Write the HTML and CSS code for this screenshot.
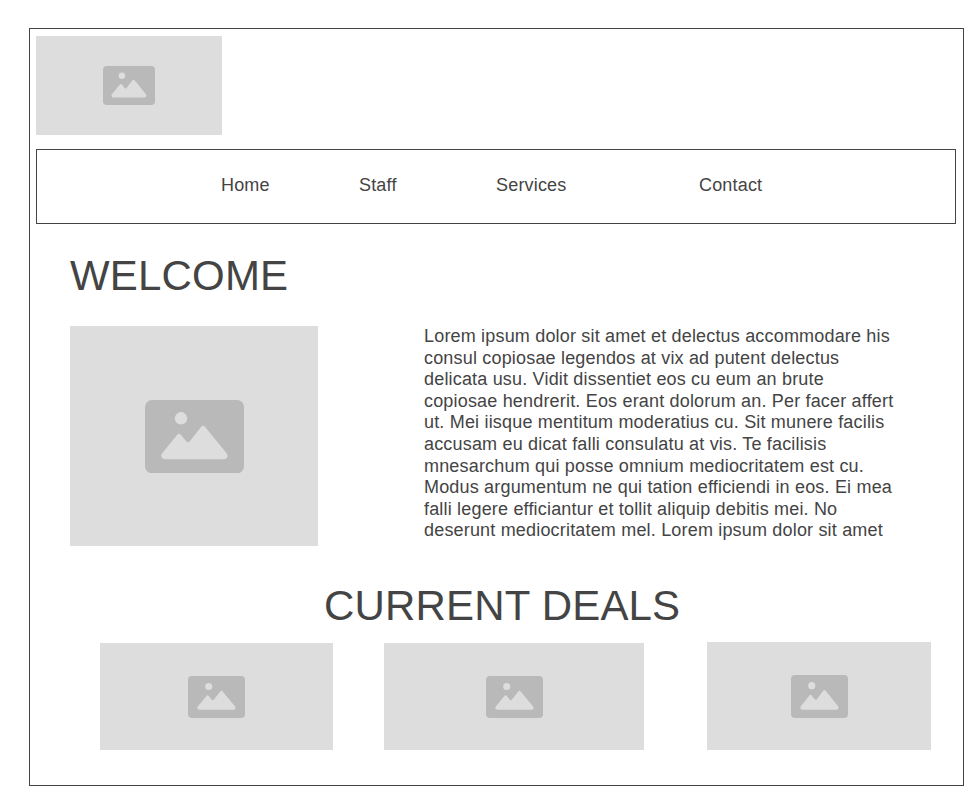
FILE: index.html
```html
<!DOCTYPE html>
<html lang="en">
<head>
<meta charset="utf-8">
<title>Welcome</title>
<link rel="stylesheet" href="styles.css">
</head>
<body>
<svg class="sprite" aria-hidden="true">
  <symbol id="picture" viewBox="0 0 99 73.4" preserveAspectRatio="none">
    <rect class="picture-frame" width="99" height="73.4" rx="7"/>
    <circle class="picture-shape" cx="36" cy="18.3" r="6.2"/>
    <path class="picture-shape" d="M17 53.4 L32 35 Q34 32.6 36 35 L41.200 41.300 Q43 43.200 44.800 41.300 L56 27 Q58 24.500 60.200 27 L81.800 53.400 Q83.400 55.600 82 57.600 Q81 59.200 79 59.200 L20 59.200 Q17.500 59.200 16.500 57.300 Q15.400 55.400 17 53.400 Z"/>
  </symbol>
</svg>
<div class="page">
  <header>
    <div class="placeholder logo"><svg><use href="#picture"/></svg></div>
    <nav class="nav">
      <a class="home">Home</a>
      <a class="staff">Staff</a>
      <a class="services">Services</a>
      <a class="contact">Contact</a>
    </nav>
  </header>
  <main>
    <h1 class="welcome-title">WELCOME</h1>
    <section class="intro">
      <div class="placeholder photo"><svg><use href="#picture"/></svg></div>
      <p class="copy">Lorem ipsum dolor sit amet et delectus accommodare his consul copiosae legendos at vix ad putent delectus delicata usu. Vidit dissentiet eos cu eum an brute copiosae hendrerit. Eos erant dolorum an. Per facer affert ut. Mei iisque mentitum moderatius cu. Sit munere facilis accusam eu dicat falli consulatu at vis. Te facilisis mnesarchum qui posse omnium mediocritatem est cu. Modus argumentum ne qui tation efficiendi in eos. Ei mea falli legere efficiantur et tollit aliquip debitis mei. No deserunt mediocritatem mel. Lorem ipsum dolor sit amet</p>
    </section>
    <h2 class="deals-title">CURRENT DEALS</h2>
    <section class="deals">
      <div class="placeholder deal deal-one"><svg><use href="#picture"/></svg></div>
      <div class="placeholder deal deal-two"><svg><use href="#picture"/></svg></div>
      <div class="placeholder deal deal-three"><svg><use href="#picture"/></svg></div>
    </section>
  </main>
</div>
</body>
</html>
```
FILE: styles.css
```css
* { box-sizing: border-box; }
body {
  margin: 0;
  background: #fff;
  color: #444;
  font: 18px/21.6px "Liberation Sans", Arial, sans-serif;
  letter-spacing: 0.18px;
}
.sprite { display: none; }
.picture-frame { fill: #b9b9b9; }
.picture-shape { fill: #ddd; }
.page {
  width: 935px;
  height: 758px;
  margin: 28px 0 0 29px;
  padding: 7px 6px 0;
  border: 1px solid #444;
}
.placeholder {
  display: flex;
  align-items: center;
  justify-content: center;
  background: #ddd;
}
.placeholder svg { display: block; flex: none; }
.logo { width: 186px; height: 99px; }
.logo svg { width: 52px; height: 39px; }
.nav {
  display: flex;
  align-items: center;
  width: 920px;
  height: 75px;
  margin-top: 14px;
  padding: 0 0 1px 184px;
  border: 1px solid #444;
}
.home { width: 138px; }
.staff { width: 137px; }
.services { width: 203px; }
h1, h2 {
  margin: 0;
  font-size: 42px;
  font-weight: 400;
  line-height: 50px;
}
.welcome-title { margin: 27px 0 0 34px; }
.intro {
  display: flex;
  gap: 106px;
  height: 220px;
  margin: 25px 0 0 34px;
}
.photo { width: 248px; height: 220px; padding-top: 1px; }
.photo svg { width: 99px; height: 73.4px; }
.copy { width: 472px; margin: 0; }
.deals-title { margin: 35px 0 0 288px; }
.deals {
  display: flex;
  align-items: flex-end;
  height: 108px;
  margin: 11px 0 0 64px;
}
.deal { height: 107px; }
.deal svg { width: 57px; height: 42px; }
.deal-one { width: 233px; }
.deal-two { width: 260px; margin: 0 63px 0 51px; }
.deal-three { width: 224px; height: 108px; }
.deal-three svg { height: 43px; }
```
